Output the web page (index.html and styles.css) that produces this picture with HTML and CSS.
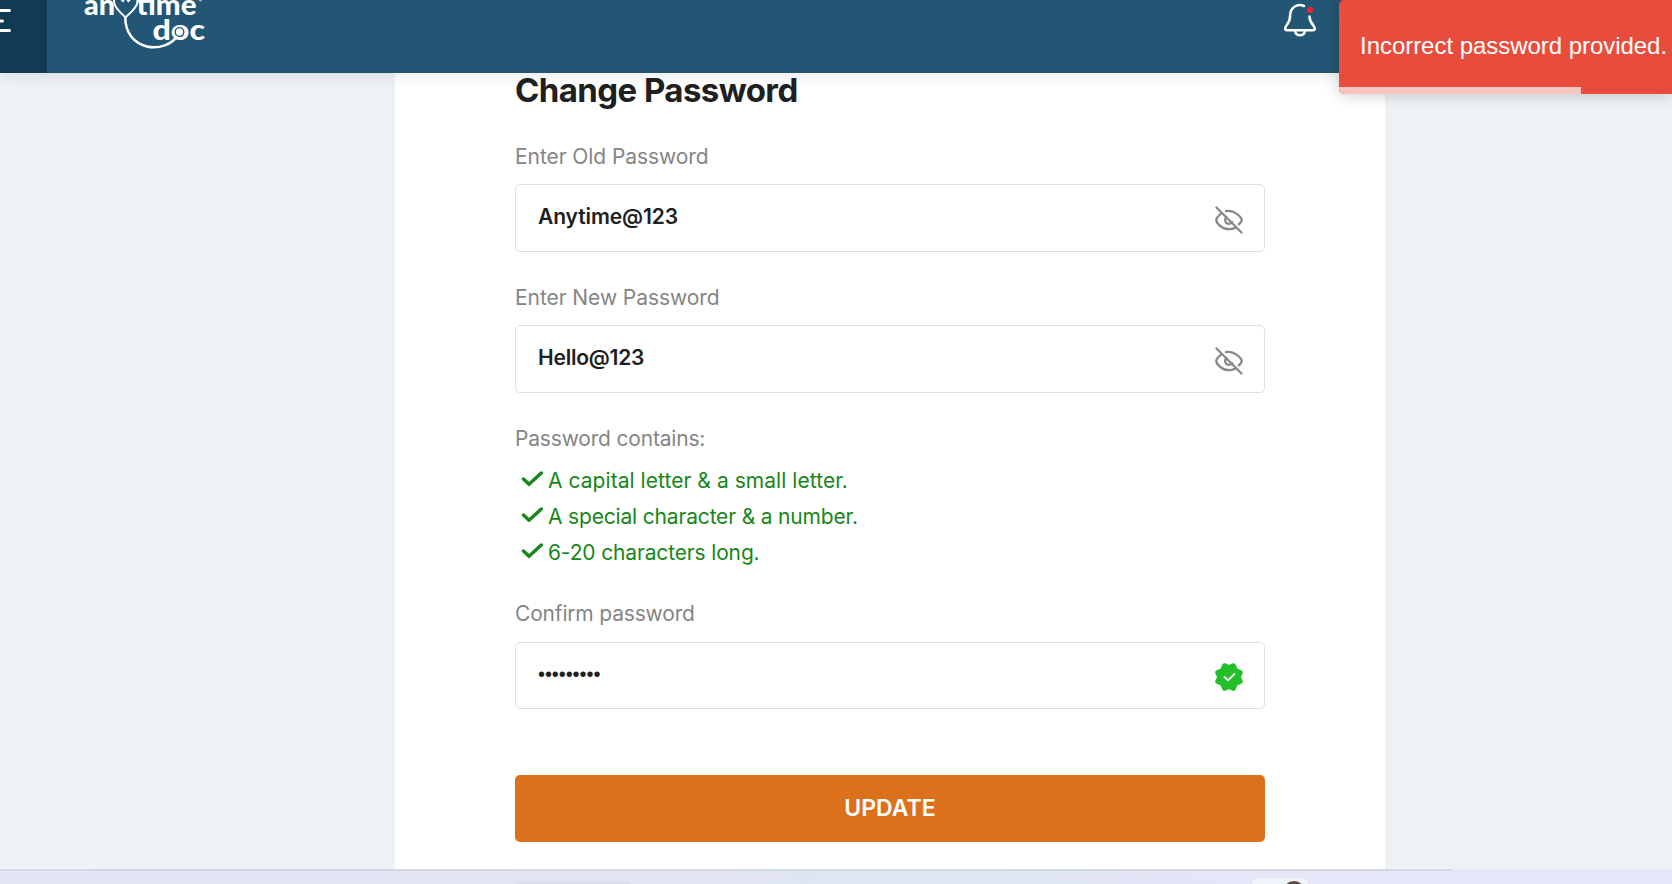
FILE: index.html
```html
<!DOCTYPE html>
<html lang="en">
<head>
<meta charset="utf-8">
<title>Change Password</title>
<link rel="stylesheet" href="styles.css">
</head>
<body>
<header class="header">
  <button class="menu" aria-label="Menu">
    <svg width="14" height="40" viewBox="0 0 14 40"><path d="M-4 10.5H9.5M-4 21H2.5M-4 30.5H9.5" stroke="#fff" stroke-width="3" stroke-linecap="round"/></svg>
  </button>
  <svg class="logo" width="130" height="50" viewBox="80 0 130 50" fill="none" stroke="#fff">
    <g class="logo-text">
      <text x="84" y="14.500" textLength="31" lengthAdjust="spacingAndGlyphs">an</text>
      <text x="136.500" y="14.500" textLength="60" lengthAdjust="spacingAndGlyphs">time</text>
      <text x="152.500" y="39.500" textLength="52.500" lengthAdjust="spacingAndGlyphs">doc</text>
    </g>
    <path d="M125.500 17.500C121 12.500 114 8 114 1C114.500 -5 123 -7 125.500 -3C128 -7 137 -5 137.500 1C137.500 8 130 12.500 125.500 17.500" stroke-width="1.900"/>
    <path d="M125.300 17C125 51 165 56 179 34" stroke-width="2.500"/>
    <path d="M121.500 -.5l2.400 2M129.800 -.5l-2.400 2" stroke-width="2.600"/>
    <circle cx="179.500" cy="32" r="4.300" fill="#fff" stroke="#225674" stroke-width="1.300"/>
    <circle cx="200.500" cy="0" r="1" stroke-width=".8"/>
  </svg>
  <svg class="bell" width="36" height="40" viewBox="1282 0 36 40" fill="none" stroke="#fff" stroke-width="2.500" stroke-linecap="round" stroke-linejoin="round">
    <path d="M1304 6C1297 3 1290.200 8 1290.200 15C1290.200 24 1285.200 25 1285.200 28.500C1285.200 29.700 1286 30.300 1287 30.300H1313C1314.200 30.300 1314.800 29.700 1314.800 28.500C1314.800 25 1309.500 24 1309.500 16.500"/>
    <path d="M1295.300 31.500C1296 36.500 1304 36.500 1304.700 31.500"/>
    <circle cx="1310" cy="10" r="3" fill="#ff1d25" stroke="none"/>
  </svg>
</header>

<main class="page">
  <section class="card">
    <h1 class="title">Change Password</h1>
    <label class="label old">Enter Old Password</label>
    <div class="field">
      <span class="value anytime">Anytime@123</span>
      <svg class="eye" viewBox="0 0 28 28"><path d="M1.500 1.500L26.500 26.500"/><path d="M5.800 7.800C3 10 1.300 12.800 1.300 14.200C1.300 16.500 6.500 23.200 14 23.200C16.200 23.200 18.200 22.700 19.900 21.900"/><path d="M11 5.200C19 3.400 26.700 11 26.700 14.200C26.700 15.400 25.200 17 23.800 18.300"/><path d="M11.300 11C9 13.500 10.200 17.800 14 17.800C15.500 17.800 16.600 17.200 17.300 16.200"/></svg>
    </div>
    <label class="label new">Enter New Password</label>
    <div class="field">
      <span class="value hello">Hello@123</span>
      <svg class="eye" viewBox="0 0 28 28"><path d="M1.500 1.500L26.500 26.500"/><path d="M5.800 7.800C3 10 1.300 12.800 1.300 14.200C1.300 16.500 6.500 23.200 14 23.200C16.200 23.200 18.200 22.700 19.900 21.900"/><path d="M11 5.200C19 3.400 26.700 11 26.700 14.200C26.700 15.400 25.200 17 23.800 18.300"/><path d="M11.300 11C9 13.500 10.200 17.800 14 17.800C15.500 17.800 16.600 17.200 17.300 16.200"/></svg>
    </div>
    <p class="label contains">Password contains:</p>
    <ul class="rules">
      <li><svg class="tick" viewBox="0 0 22 16"><path d="M2.500 8L8 13.300L20.300 2"/></svg><span class="r1">A capital letter &amp; a small letter.</span></li>
      <li><svg class="tick" viewBox="0 0 22 16"><path d="M2.500 8L8 13.300L20.300 2"/></svg><span class="r2">A special character &amp; a number.</span></li>
      <li><svg class="tick" viewBox="0 0 22 16"><path d="M2.500 8L8 13.300L20.300 2"/></svg><span class="r3">6-20 characters long.</span></li>
    </ul>
    <label class="label confirm">Confirm password</label>
    <div class="field short">
      <span class="dots">•••••••••</span>
      <svg class="badge" viewBox="0 0 28 28"><path d="M14 4.200L18.500 2.300L20.900 7.100L25.700 9.500L23.800 14L25.700 18.500L20.900 20.900L18.500 25.700L14 23.800L9.500 25.700L7.100 20.900L2.300 18.500L4.200 14L2.300 9.500L7.100 7.100L9.500 2.300Z" fill="#22bf28" stroke="#22bf28" stroke-width="4.200" stroke-linejoin="round"/><path d="M9.500 14L13 17.300L19.500 10.800" fill="none" stroke="#fff" stroke-width="1.900" stroke-linecap="round" stroke-linejoin="round"/></svg>
    </div>
    <button class="update"><span>UPDATE</span></button>
  </section>
</main>

<footer class="taskbar">
  <div class="taskbar-line"></div>
  <div class="task-tile"></div>
  <div class="task-app"><i class="avatar"></i></div>
</footer>

<div class="toast" role="alert">
  <p>Incorrect password provided.</p>
  <div class="toast-progress"></div>
</div>
</body>
</html>
```

FILE: styles.css
```css
* { box-sizing: border-box; }
body {
  margin: 0;
  height: 884px;
  overflow: hidden;
  display: flex;
  flex-direction: column;
  background: #eef2f5;
  font-family: Inter, "Liberation Sans", sans-serif;
  color: #202020;
}
button { border: 0; font: inherit; }
.header {
  flex: none;
  height: 73px;
  display: flex;
  align-items: flex-start;
  background: #225674;
  box-shadow: 0 2px 16px rgba(0, 0, 0, .09);
  position: relative;
  z-index: 1;
}
.menu {
  width: 47px;
  height: 73px;
  padding: 0;
  display: flex;
  align-items: flex-start;
  background: #113a55;
}
.logo { margin-left: 33px; }
.logo-text {
  font-family: Lato, sans-serif;
  font-weight: 900;
  font-size: 29px;
  fill: #fff;
  stroke: none;
}
.bell { margin-left: 1072px; }

.page {
  flex: none;
  height: 796px;
  padding-left: 395px;
}
.card {
  width: 990px;
  height: 796px;
  padding: 0 120px;
  background: #fff;
}
.title {
  margin: 0 0 35px;
  font-size: 33px;
  line-height: 34px;
  font-weight: 700;
  letter-spacing: -.58px;
  white-space: nowrap;
}
.label {
  display: block;
  margin: 0 0 12px;
  font-size: 21px;
  line-height: 30px;
  letter-spacing: -.07px;
  color: #858585;
}
.contains, .confirm { letter-spacing: -.18px; }
.field {
  height: 68px;
  margin-bottom: 31px;
  padding: 0 21.5px 0 22px;
  border: 1px solid #dedfe0;
  border-radius: 5px;
  display: flex;
  align-items: center;
  justify-content: space-between;
}
.value {
  font-size: 21px;
  font-weight: 600;
  line-height: 30px;
  padding-bottom: 2px;
  letter-spacing: -.1px;
}
.hello { letter-spacing: -.22px; }
.eye {
  width: 28px;
  height: 28px;
  margin-top: 4px;
  fill: none;
  stroke: #888;
  stroke-width: 2.3;
  stroke-linecap: round;
}
.contains { margin-bottom: 9px; }
.rules {
  list-style: none;
  margin: 0 0 28px;
  padding: 0 0 0 6px;
  color: #168718;
  font-size: 21px;
  line-height: 36px;
}
.rules li { display: flex; align-items: center; gap: 5px; height: 36px; }
.r1 { letter-spacing: .05px; }
.r2 { letter-spacing: -.17px; }
.r3 { letter-spacing: -.15px; }
.tick {
  width: 22px;
  height: 16px;
  margin-bottom: 4px;
  fill: none;
  stroke: #168718;
  stroke-width: 3.4;
  stroke-linecap: round;
  stroke-linejoin: round;
}
.confirm { margin-bottom: 13px; }
.short { height: 67px; margin-bottom: 66px; }
.dots {
  font: 20px/30px "Liberation Sans", sans-serif;
  letter-spacing: -.08px;
  padding-bottom: 4px;
}
.badge { width: 28px; height: 28px; margin-top: 2px; }
.update {
  width: 750px;
  height: 67px;
  padding: 0 0 2px;
  border-radius: 5px;
  background: #dd711b;
  color: #fff;
  font-size: 23px;
  font-weight: 600;
}

.taskbar {
  flex: none;
  height: 15px;
  position: relative;
  overflow: hidden;
  background: linear-gradient(90deg, #e2e6f5, #e1e4f3 40%, #dfe5f3 52%, #e2e6f6 70%, #e4e8f8);
}
.taskbar-line { width: 1452px; height: 2px; background: #d4d8e6; }
.task-tile {
  position: absolute;
  left: 515px;
  top: 13px;
  width: 116px;
  height: 2px;
  border-radius: 3px 3px 0 0;
  background: #dadeec;
}
.task-app {
  position: absolute;
  left: 1251px;
  top: 8px;
  width: 58px;
  height: 12px;
  overflow: hidden;
  border: 1px solid #dde2ee;
  border-radius: 6px;
  background: #f0f3fa;
}
.avatar {
  position: absolute;
  left: 31px;
  top: 3px;
  width: 22px;
  height: 22px;
  border-radius: 50%;
  background: #604848;
}

.toast {
  position: absolute;
  z-index: 2;
  left: 1339px;
  top: 0;
  width: 333px;
  height: 94px;
  display: flex;
  flex-direction: column;
  justify-content: space-between;
  border-radius: 5px 0 0 5px;
  background: #e84c3d;
  color: #fff;
  box-shadow: 0 1px 16px rgba(0, 0, 0, .2);
  overflow: hidden;
}
.toast p {
  margin: 31px 0 0 21px;
  font: 24px/30px "Liberation Sans", sans-serif;
  letter-spacing: -.04px;
  white-space: nowrap;
}
.toast-progress { width: 242px; height: 7px; background: #f6c5c1; }
```
